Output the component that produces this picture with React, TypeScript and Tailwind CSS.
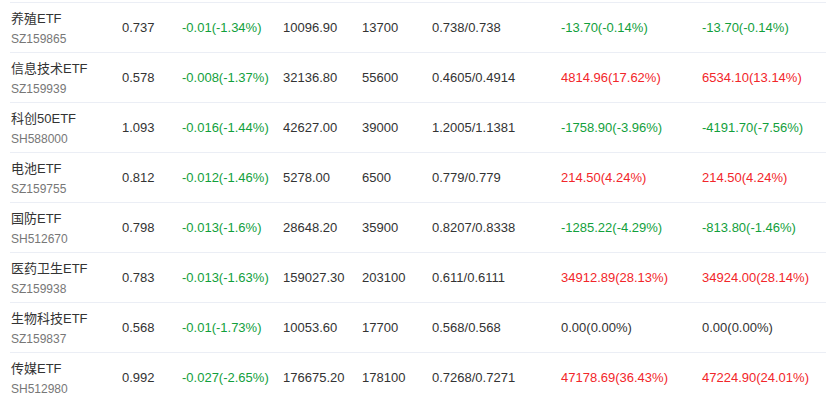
import React from "react";

type Row = {
  name: string;
  code: string;
  price: string;
  change: string;
  amount: string;
  vol: string;
  ba: string;
  p1: string;
  p2: string;
  c1: "g" | "r" | "n";
  c2: "g" | "r" | "n";
};

const rows: Row[] = [
  { name: "养殖ETF", code: "SZ159865", price: "0.737", change: "-0.01(-1.34%)", amount: "10096.90", vol: "13700", ba: "0.738/0.738", p1: "-13.70(-0.14%)", p2: "-13.70(-0.14%)", c1: "g", c2: "g" },
  { name: "信息技术ETF", code: "SZ159939", price: "0.578", change: "-0.008(-1.37%)", amount: "32136.80", vol: "55600", ba: "0.4605/0.4914", p1: "4814.96(17.62%)", p2: "6534.10(13.14%)", c1: "r", c2: "r" },
  { name: "科创50ETF", code: "SH588000", price: "1.093", change: "-0.016(-1.44%)", amount: "42627.00", vol: "39000", ba: "1.2005/1.1381", p1: "-1758.90(-3.96%)", p2: "-4191.70(-7.56%)", c1: "g", c2: "g" },
  { name: "电池ETF", code: "SZ159755", price: "0.812", change: "-0.012(-1.46%)", amount: "5278.00", vol: "6500", ba: "0.779/0.779", p1: "214.50(4.24%)", p2: "214.50(4.24%)", c1: "r", c2: "r" },
  { name: "国防ETF", code: "SH512670", price: "0.798", change: "-0.013(-1.6%)", amount: "28648.20", vol: "35900", ba: "0.8207/0.8338", p1: "-1285.22(-4.29%)", p2: "-813.80(-1.46%)", c1: "g", c2: "g" },
  { name: "医药卫生ETF", code: "SZ159938", price: "0.783", change: "-0.013(-1.63%)", amount: "159027.30", vol: "203100", ba: "0.611/0.6111", p1: "34912.89(28.13%)", p2: "34924.00(28.14%)", c1: "r", c2: "r" },
  { name: "生物科技ETF", code: "SZ159837", price: "0.568", change: "-0.01(-1.73%)", amount: "10053.60", vol: "17700", ba: "0.568/0.568", p1: "0.00(0.00%)", p2: "0.00(0.00%)", c1: "n", c2: "n" },
  { name: "传媒ETF", code: "SH512980", price: "0.992", change: "-0.027(-2.65%)", amount: "176675.20", vol: "178100", ba: "0.7268/0.7271", p1: "47178.69(36.43%)", p2: "47224.90(24.01%)", c1: "r", c2: "r" },
];

const colorCls = (c: "g" | "r" | "n") =>
  c === "g" ? "text-[#12a03c]" : c === "r" ? "text-[#f2262a]" : "text-[#333333]";

export default function App() {
  return (
    <div
      className="w-[826px] h-[401px] overflow-hidden bg-white text-[13px] text-[#333333]"
      style={{ fontFamily: '"Liberation Sans", Arial, "Noto Sans CJK SC", sans-serif' }}
    >
      <div className="h-[2px]" />
      <div className="ml-[10px] border-t border-[#ebeef5]">
        {rows.map((r) => (
          <div
            key={r.code}
            className="grid grid-cols-[111px_60px_101px_79px_70px_129px_141px_1fr] h-[50px] border-b border-[#ebeef5] pl-[1px] items-center"
          >
            <div className="flex flex-col pt-[1px]">
              <span className="leading-[21px]">{r.name}</span>
              <span className="leading-[20px] text-[12px] text-[#777777]">{r.code}</span>
            </div>
            <div>{r.price}</div>
            <div className="text-[#12a03c]">{r.change}</div>
            <div>{r.amount}</div>
            <div>{r.vol}</div>
            <div>{r.ba}</div>
            <div className={colorCls(r.c1)}>{r.p1}</div>
            <div className={colorCls(r.c2)}>{r.p2}</div>
          </div>
        ))}
      </div>
    </div>
  );
}
